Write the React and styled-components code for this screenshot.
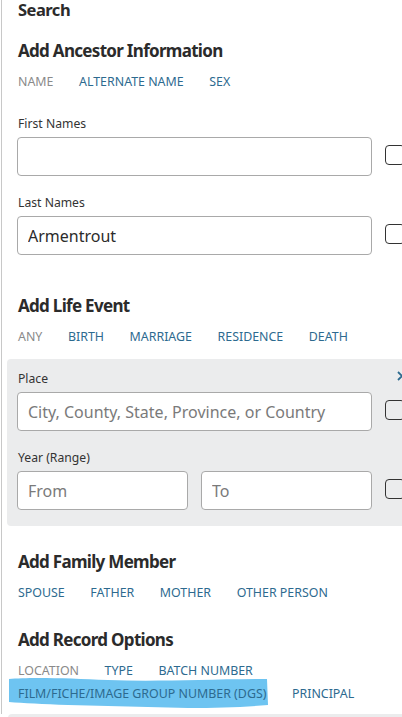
import React from 'react';
import styled, { createGlobalStyle } from 'styled-components';

const GlobalStyle = createGlobalStyle`
  html, body {
    margin: 0;
    padding: 0;
    background: #fff;
    overflow: hidden;
  }
  body {
    font-family: 'Noto Sans', 'Open Sans', sans-serif;
    color: #333;
  }
`;

const SECTIONS = {
  ancestor: [
    { id: 1, label: 'NAME', active: true },
    { id: 2, label: 'ALTERNATE NAME' },
    { id: 3, label: 'SEX' },
  ],
  life: [
    { id: 1, label: 'ANY', active: true },
    { id: 2, label: 'BIRTH' },
    { id: 3, label: 'MARRIAGE' },
    { id: 4, label: 'RESIDENCE' },
    { id: 5, label: 'DEATH' },
  ],
  family: [
    { id: 1, label: 'SPOUSE' },
    { id: 2, label: 'FATHER' },
    { id: 3, label: 'MOTHER' },
    { id: 4, label: 'OTHER PERSON' },
  ],
  record: [
    { id: 1, label: 'LOCATION', active: true },
    { id: 2, label: 'TYPE' },
    { id: 3, label: 'BATCH NUMBER' },
    { id: 4, label: 'FILM/FICHE/IMAGE GROUP NUMBER (DGS)' },
    { id: 5, label: 'PRINCIPAL' },
  ],
};

const TabList = ({ items }) => (
  <Tabs>
    {items.map(({ id, label, active }) => (
      <Tab key={id} $active={active}>
        {label}
      </Tab>
    ))}
  </Tabs>
);

const App = () => {
  return (
    <>
      <GlobalStyle />
      <Page>
        <PageTitle>Search</PageTitle>

        <SectionTitle $top={19}>Add Ancestor Information</SectionTitle>
        <TabList items={SECTIONS.ancestor} />

        <Fields $top={21}>
          <Field>
            <Label>First Names</Label>
            <Row>
              <TextInput defaultValue="" />
              <ExactBox />
            </Row>
          </Field>
          <Field>
            <Label>Last Names</Label>
            <Row>
              <TextInput defaultValue="Armentrout" />
              <ExactBox />
            </Row>
          </Field>
        </Fields>

        <SectionTitle $top={40}>Add Life Event</SectionTitle>
        <TabList items={SECTIONS.life} />

        <EventPanel>
          <CloseIcon viewBox="0 0 10 10">
            <path d="M1 1 L9 9 M1 9 L9 1" stroke="#2d6a8f" strokeWidth="1.8" fill="none" />
          </CloseIcon>
          <Fields>
            <Field>
              <Label>Place</Label>
              <Row>
                <TextInput placeholder="City, County, State, Province, or Country" />
                <ExactBox />
              </Row>
            </Field>
            <Field>
              <Label>Year (Range)</Label>
              <Row>
                <RangeGroup>
                  <TextInput placeholder="From" />
                  <TextInput placeholder="To" />
                </RangeGroup>
                <ExactBox />
              </Row>
            </Field>
          </Fields>
        </EventPanel>

        <SectionTitle $top={25}>Add Family Member</SectionTitle>
        <TabList items={SECTIONS.family} />

        <SectionTitle $top={25}>Add Record Options</SectionTitle>
        <RecordTabs>
          <Highlight viewBox="0 0 260 33" preserveAspectRatio="none">
            <path
              d="M1 3 C20 1 60 2 100 4 C150 6 200 3 259 3 L260 29 C235 31 210 32 180 32 C140 31 100 30 60 29 C35 28 15 27 1 26 Z"
              fill="#6ec4f1"
            />
          </Highlight>
          <TabList items={SECTIONS.record} />
        </RecordTabs>
      </Page>
      <NextBand />
    </>
  );
};

const Page = styled.div`
  margin-left: 1px;
  border-left: 1px solid #c8c8c8;
  padding: 0 0 0 15px;
  height: 714px;
  box-sizing: border-box;
  overflow: hidden;
`;

const PageTitle = styled.h1`
  margin: -1px 0 0 1px;
  font-size: 16.5px;
  line-height: 22px;
  font-weight: 700;
  letter-spacing: -0.5px;
  color: #2b2b2b;
`;

const SectionTitle = styled.h2`
  margin: ${({ $top }) => $top}px 0 0 1px;
  font-size: 17px;
  line-height: 22px;
  font-weight: 700;
  letter-spacing: -0.7px;
  color: #2b2b2b;
`;

const Tabs = styled.div`
  display: flex;
  flex-wrap: wrap;
  column-gap: 25.6px;
  row-gap: 1px;
  margin: 9px 0 0 1px;
`;

const Tab = styled.span`
  font-size: 12.4px;
  line-height: 22px;
  color: ${({ $active }) => ($active ? '#8a8a8a' : '#2d6a8f')};
  cursor: pointer;
`;

const Fields = styled.div`
  display: flex;
  flex-direction: column;
  gap: 17px;
  margin-top: ${({ $top }) => $top || 0}px;
`;

const Field = styled.div`
  display: flex;
  flex-direction: column;
  gap: 4px;
`;

const Label = styled.div`
  margin-left: 1px;
  font-size: 12.2px;
  line-height: 19px;
  color: #333;
`;

const Row = styled.div`
  display: flex;
  align-items: center;
  gap: 13px;
`;

const TextInput = styled.input`
  width: 355px;
  height: 39px;
  box-sizing: border-box;
  border: 1px solid #a9a9a9;
  border-radius: 4px;
  background: #fff;
  padding: 0 10px;
  font-family: 'Noto Sans', 'Open Sans', sans-serif;
  font-size: 16px;
  color: #2b2b2b;
  flex-shrink: 0;
  outline: none;

  &::placeholder {
    color: #7a7a7a;
  }
`;

const RangeGroup = styled.div`
  display: flex;
  gap: 13px;
  width: 355px;

  ${TextInput} {
    width: 171px;
  }
`;

const ExactBox = styled.span`
  width: 20px;
  height: 20px;
  margin-top: -3px;
  border: 1px solid #333;
  border-radius: 4px;
  flex-shrink: 0;
  box-sizing: border-box;
`;

const EventPanel = styled.div`
  position: relative;
  margin: 11px -20px 0 -10px;
  padding: 10px 10px 16px 10px;
  background: #ebeced;
  border-radius: 4px;
`;

const CloseIcon = styled.svg`
  position: absolute;
  left: 390px;
  top: 12px;
  width: 10px;
  height: 10px;
`;

const RecordTabs = styled.div`
  position: relative;
  margin-top: 9px;

  ${Tabs} {
    position: relative;
    margin-top: 0;
  }
`;

const Highlight = styled.svg`
  position: absolute;
  left: -9px;
  top: 16px;
  width: 260px;
  height: 33px;
`;

const NextBand = styled.div`
  height: 10px;
  margin-left: 8px;
  background: #ebeced;
  border-radius: 4px 0 0 0;
`;

export default App;
